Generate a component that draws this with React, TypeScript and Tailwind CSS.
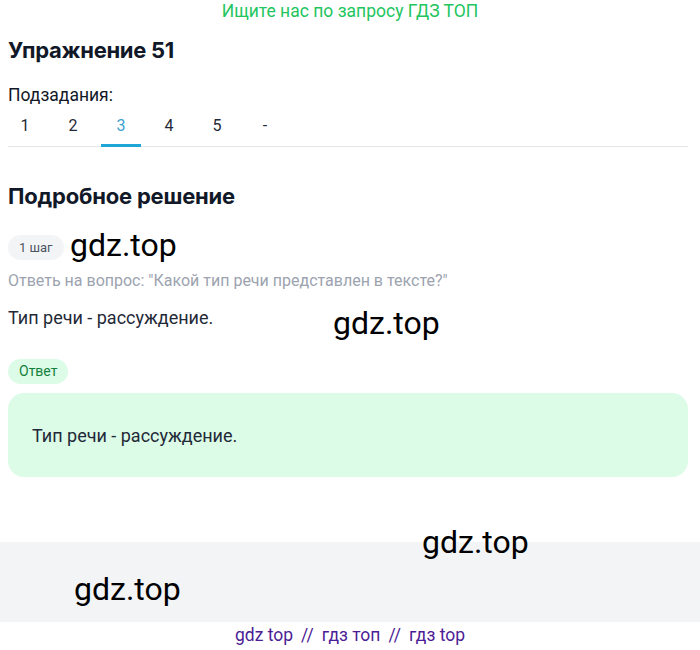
import React from "react";

const tabs = ["1", "2", "3", "4", "5", "-"];

function Watermark({ className }: { className: string }) {
  return (
    <span className={`pointer-events-none absolute text-[32px] leading-none text-black ${className}`} style={{ fontFamily: "Roboto, sans-serif" }}>
      gdz.top
    </span>
  );
}

export default function App() {
  return (
    <div className="relative min-h-[650px] w-[700px] bg-white text-[#111827]" style={{ fontFamily: "Roboto, 'Liberation Sans', sans-serif" }}>
      <div className="pt-[1px] text-center text-[17.5px] leading-[20px] text-[#22c55e]">Ищите нас по запросу ГДЗ ТОП</div>

      <main className="pl-2 pr-3">
        <h1 className="mt-[15px] text-[22px] font-bold leading-[28px] tracking-[-0.3px]" style={{ fontFamily: "Inter, sans-serif" }}>
          Упражнение 51
        </h1>

        <div className="mt-[21px] text-[17.5px] leading-[20px]">Подзадания:</div>

        <div className="mt-[4px] border-b border-[#e5e7eb]">
          <div className="-ml-[3px] flex gap-2">
            {tabs.map((t) => (
              <div
                key={t}
                className={`-mb-px flex h-[38px] w-10 justify-center pt-[7px] text-[16px] leading-[20px] ${t === "3" ? "border-b-[3px] border-[#1ea7d6] text-[#3c9fd0]" : "text-[#1f2937]"}`}
              >
                {t}
              </div>
            ))}
          </div>
        </div>

        <h2 className="mt-[35px] text-[22px] font-bold leading-[28px] tracking-[-0.2px]" style={{ fontFamily: "Inter, sans-serif" }}>
          Подробное решение
        </h2>

        <div className="mt-[25px] flex">
          <span className="flex h-[25px] items-center rounded-full bg-[#f3f4f6] px-[11px] text-[13px] text-[#4b5563]">1 шаг</span>
        </div>

        <p className="mt-[11px] text-[16px] leading-[20px] text-[#9ca3af]">Ответь на вопрос: "Какой тип речи представлен в тексте?"</p>

        <p className="mt-[15px] text-[18px] leading-[24px] text-[#1f2937]">Тип речи - рассуждение.</p>

        <div className="mt-[29px] flex">
          <span className="flex h-[25px] items-center rounded-full bg-[#dcfce7] px-[11px] text-[14px] text-[#15803d]">Ответ</span>
        </div>

        <div className="mt-[9px] flex h-[84px] items-center rounded-2xl bg-[#dcfce7] px-6 text-[18px] text-[#1f2937]">
          Тип речи - рассуждение.
        </div>
      </main>

      <div className="mt-[65px] h-[80px] bg-[#f3f4f6]" />

      <footer className="flex h-[26px] items-center justify-center gap-2 text-[17.5px] text-[#4c1d95]">
        <span>gdz top</span>
        <span>//</span>
        <span>гдз топ</span>
        <span>//</span>
        <span>гдз top</span>
      </footer>

      <Watermark className="left-[70px] top-[229px]" />
      <Watermark className="left-[333px] top-[307px]" />
      <Watermark className="left-[422px] top-[526px]" />
      <Watermark className="left-[74px] top-[573px]" />
    </div>
  );
}
